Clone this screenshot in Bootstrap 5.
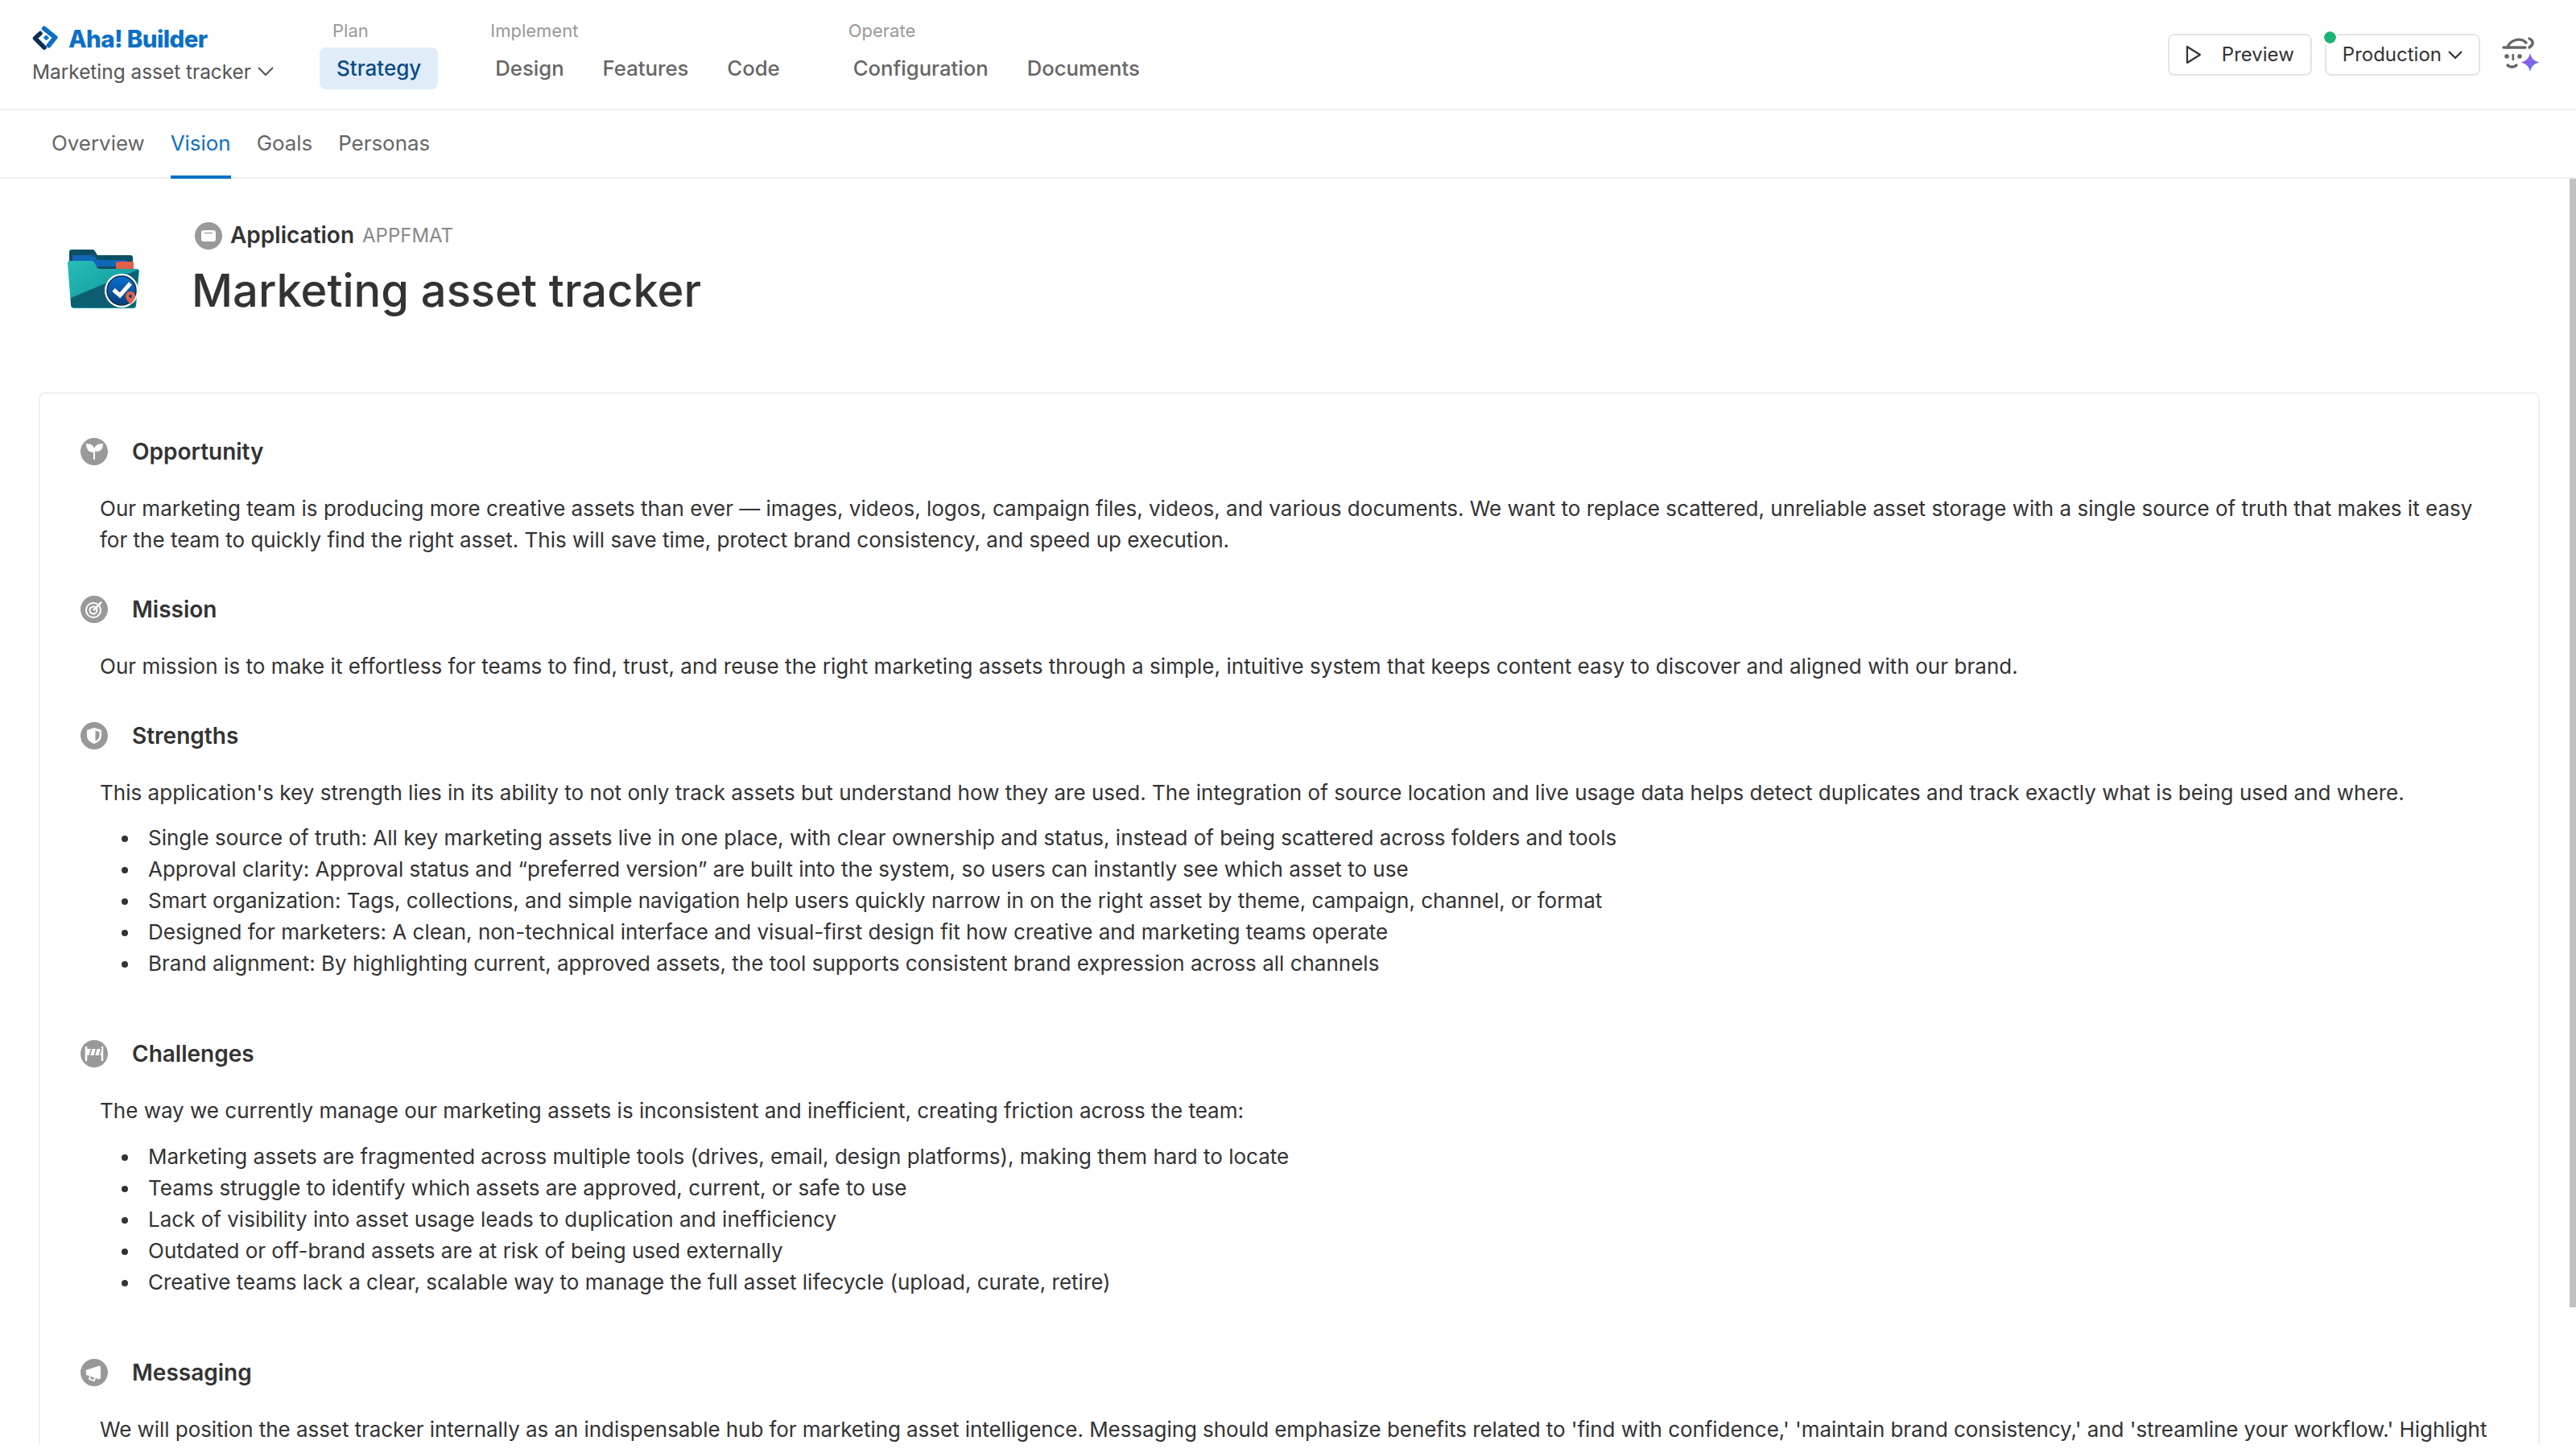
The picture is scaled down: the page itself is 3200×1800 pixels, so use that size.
<!DOCTYPE html>
<html lang="en">
<head>
<meta charset="UTF-8" />
<title>Marketing asset tracker</title>
<link href="https://cdn.jsdelivr.net/npm/bootstrap@5.3.0/dist/css/bootstrap.min.css" rel="stylesheet"/>
<style>
html, body { height: 100%; overflow: hidden; }
body { font-family: Inter, "Liberation Sans", sans-serif; font-size: 26px; line-height: 39px; color: #333; background: #fff; }
.top-bar { height: 137px; border-bottom: 2px solid #f0f0f0; padding: 0 45px 0 40px; }
.brand-box { width: 357px; padding-top: 28px; }
.brand-name { color: #0b6fc6; font-weight: 800; font-size: 29.5px; line-height: 40px; letter-spacing: -.6px; gap: 13px; }
.app-switch { color: #555; font-size: 24.4px; line-height: 36px; margin-top: 3px; gap: 8px; }
.nav-grp { padding-top: 22px; }
.nav-grp-label { color: #999; font-size: 22px; line-height: 32px; padding-left: 16px; }
.nav-grp-items { gap: 6px; margin-top: 5px; }
.top-link { color: #666; font-weight: 500; font-size: 25.7px; line-height: 52px; height: 52px; padding: 0 21px; border-radius: 8px; text-decoration: none; }
.top-link.on { background: #e0edf9; color: #0a4a86; font-size: 26px; }
.grp-impl { margin-left: 50px; }
.grp-impl .nav-grp-label, .grp-oper .nav-grp-label { padding-left: 15px; }
.grp-oper { margin-left: 49px; }
.btn-ghost { height: 52px; border: 2px solid #e4e4e4; border-radius: 8px; background: #fff; color: #333; font-size: 24px; line-height: 48px; padding: 0 20px; }
.dot-live { position: absolute; left: -3px; top: -5px; width: 15px; height: 15px; border-radius: 50%; background: #1eb276; outline: 3px solid #fff; }
.assist-ico { margin: 4px 0 0 12px; overflow: visible; }
.tab-bar { height: 85px; border-bottom: 2px solid #f0f0f0; padding-left: 64px; gap: 32px; }
.tab-link { color: #666; font-size: 25.9px; line-height: 82px; height: 85px; text-decoration: none; }
.tab-link.on { color: #0b6fc6; border-bottom: 4px solid #0b6fc6; }
.page-head { height: 265px; padding: 0 0 0 83px; }
.folder-ico { margin-top: 87px; }
.head-text { margin-left: 65px; padding-top: 51px; }
.kind-row { height: 39px; margin-left: 4px; gap: 10px; font-size: 28px; }
.kind-name { font-weight: 600; }
.kind-ref { color: #888; font-size: 24px; }
.app-title { font-size: 56px; line-height: 72px; font-weight: 500; margin: 13px 0 0; color: #333; letter-spacing: 0; }
.sheet { margin: 0 45px 0 48px; border: 2px solid #f0f0f0; border-bottom: 0; border-radius: 8px 8px 0 0; padding: 54px 48px 0 50px; }
.sec-head { height: 36px; gap: 30px; }
.sec-head h2 { font-size: 28px; line-height: 36px; font-weight: 600; margin: 0; color: #333; }
.sec-body { margin: 0 0 0 24px; padding-top: 33px; }
.sec-body p { margin: 0; }
.sec-body ul { margin: 17px 0 0; padding-left: 50px; }
.sec-body ul.list-low { margin-top: 18px; }
.sec-body li { padding-left: 10px; }
.sec-gap { margin-top: 49px; }
.sec-gap-list { margin-top: 75px; }
.fit-wide { letter-spacing: .05px; }
.fit-mid { letter-spacing: .025px; }
.fit-narrow { letter-spacing: -.06px; }
.scroll-thumb { position: absolute; right: 0; top: 222px; width: 8px; height: 1402px; background: #c1c1c1; }
</style>
</head>
<body class="position-relative">

<header class="top-bar d-flex">
  <div class="brand-box">
    <div class="brand-name d-flex align-items-center">
      <svg width="32" height="32" viewBox="0 0 32 32" fill="none" stroke-linecap="round" stroke-linejoin="round"><path d="M15 3.500 28.500 14.500 20.500 24.500" stroke="#0b6fc6" stroke-width="6"/><path d="M10 9.500 3.500 15.500 15 27" stroke="#0c2f57" stroke-width="5.500"/><path d="M17.500 12 20.500 15 17.500 18 14.500 15Z" fill="#0b6fc6" stroke="#0b6fc6"/></svg>
      <span>Aha! Builder</span>
    </div>
    <div class="app-switch d-flex align-items-center">
      <span>Marketing asset tracker</span>
      <svg width="20" height="12" viewBox="0 0 20 12" fill="none" stroke="#555" stroke-width="2"><path d="M1 1l9 9 9-9"/></svg>
    </div>
  </div>
  <div class="nav-grp">
    <div class="nav-grp-label">Plan</div>
    <div class="nav-grp-items d-flex"><a class="top-link on" href="#">Strategy</a></div>
  </div>
  <div class="nav-grp grp-impl">
    <div class="nav-grp-label">Implement</div>
    <div class="nav-grp-items d-flex"><a class="top-link" href="#">Design</a><a class="top-link" href="#">Features</a><a class="top-link" href="#">Code</a></div>
  </div>
  <div class="nav-grp grp-oper">
    <div class="nav-grp-label">Operate</div>
    <div class="nav-grp-items d-flex"><a class="top-link" href="#">Configuration</a><a class="top-link" href="#">Documents</a></div>
  </div>
  <div class="ms-auto d-flex align-items-start gap-3 pt-5" style="padding-top:42px !important">
    <button class="btn-ghost d-flex align-items-center" type="button">
      <svg width="20" height="24" viewBox="0 0 20 24" fill="none" stroke="#333" stroke-width="2.2" stroke-linejoin="round" style="margin-right:25px"><path d="M2 2v20l16-10Z"/></svg>
      Preview
    </button>
    <button class="btn-ghost d-flex align-items-center gap-2 position-relative" type="button">
      <span class="dot-live"></span>
      Production
      <svg width="18" height="11" viewBox="0 0 18 11" fill="none" stroke="#333" stroke-width="2.2"><path d="M1 1l8 8 8-8"/></svg>
    </button>
    <svg class="assist-ico" width="46" height="46" viewBox="0 0 46 46">
      <defs><linearGradient id="spark" x1="0" y1="0" x2="1" y2="1"><stop offset="0" stop-color="#b04ce8"/><stop offset="1" stop-color="#4d7df0"/></linearGradient></defs>
      <g fill="none" stroke="#666" stroke-width="3.4" stroke-linecap="round">
        <path d="M6 13C8 5 21-1 29 7"/><path d="M1 13h27"/><path d="M33 2c5 2 6 7 0 11"/><path d="M6 35c3 3 8 3 11 0"/>
      </g>
      <circle cx="5" cy="24" r="2.800" fill="#666"/><circle cx="21" cy="24" r="2.800" fill="#666"/><rect x="11.500" y="21" width="2.600" height="8" fill="#666"/>
      <path d="M34 20c2 7 4 9 11 11.500-7 2.500-9 4.500-11 11.500-2-7-4-9-11-11.500 7-2.500 9-4.500 11-11.500Z" fill="url(#spark)"/>
    </svg>
  </div>
</header>

<nav class="tab-bar d-flex">
  <a class="tab-link" href="#">Overview</a>
  <a class="tab-link on" href="#">Vision</a>
  <a class="tab-link" href="#">Goals</a>
  <a class="tab-link" href="#">Personas</a>
</nav>

<section class="page-head d-flex">
  <svg class="folder-ico" width="90" height="76" viewBox="0 0 90 76">
    <defs>
      <linearGradient id="fold" x1="0" y1="0" x2="1" y2="1"><stop offset="0" stop-color="#25bdb8"/><stop offset="1" stop-color="#0f8f98"/></linearGradient>
      <linearGradient id="disc" x1="0" y1="0" x2="0" y2="1"><stop offset="0" stop-color="#0a6fd0"/><stop offset="1" stop-color="#0b3f7a"/></linearGradient>
    </defs>
    <path d="M3 18V4q0-3 3-3h26q2 0 3 2l3 5h41q3 0 3 3v14H3Z" fill="#0c4f63"/>
    <path d="M7 22V10q0-2 2-2h23q2 0 3 2l3 4h36v8Z" fill="#1266b8"/>
    <rect x="61" y="16" width="22" height="10" rx="2" fill="#e2604a"/>
    <path d="M1 18q0-3 3-3h26q3 0 4 2l3 5q1 3 4 3h46q3 0 3 3l-4 43q0 3-4 3H9q-4 0-4-4Z" fill="url(#fold)"/>
    <path d="M89 26 85 70q0 3-4 3H9q-4 0-4-4v-8Z" fill="#0c5f72"/>
    <circle cx="68" cy="52" r="21" fill="#fff"/>
    <circle cx="68" cy="52" r="18" fill="url(#disc)" stroke="#0a2c4c" stroke-width="1.5"/>
    <path d="M58 51l8 7 13-15" fill="none" stroke="#fff" stroke-width="5"/>
    <path d="M79 53c-4 0-6 3-6 6 0 3 3 7 6 10 3-3 6-7 6-10 0-3-2-6-6-6Z" fill="#e2604a"/>
    <circle cx="79" cy="59" r="2" fill="#0b3f7a"/>
  </svg>
  <div class="head-text">
    <div class="kind-row d-flex align-items-center">
      <svg width="34" height="34" viewBox="0 0 34 34"><circle cx="17" cy="17" r="17" fill="#999"/><rect x="8" y="10" width="18" height="14" rx="3" fill="#fff"/><path d="M12 13.500h10" stroke="#999" stroke-width="1.300"/></svg>
      <span class="kind-name">Application</span>
      <span class="kind-ref">APPFMAT</span>
    </div>
    <h1 class="app-title">Marketing asset tracker</h1>
  </div>
</section>

<main class="sheet">
  <div class="sec-head d-flex align-items-center">
    <svg width="34" height="34" viewBox="0 0 34 34"><circle cx="17" cy="17" r="17" fill="#999"/><path d="M17 26V17M17 17C17 11 13 8 8 8c0 6 3 9 9 9ZM18 14c1-4 4-6 9-6 0 5-3 8-8 8" fill="#fff" stroke="#fff" stroke-width="2" stroke-linecap="round" stroke-linejoin="round"/></svg>
    <h2>Opportunity</h2>
  </div>
  <div class="sec-body">
    <p>Our marketing team is producing more creative assets than ever — images, videos, logos, campaign files, videos, and various documents. We want to replace scattered, unreliable asset storage with a single source of truth that makes it easy for the team to quickly find the right asset. This will save time, protect brand consistency, and speed up execution.</p>
  </div>

  <div class="sec-head sec-gap d-flex align-items-center">
    <svg width="34" height="34" viewBox="0 0 34 34"><circle cx="17" cy="17" r="17" fill="#999"/><g fill="none" stroke="#fff" stroke-width="2"><circle cx="16" cy="18" r="9"/><circle cx="16" cy="18" r="4.500"/><path d="M16 18 26 8" stroke-width="2.500"/></g></svg>
    <h2>Mission</h2>
  </div>
  <div class="sec-body">
    <p class="fit-wide">Our mission is to make it effortless for teams to find, trust, and reuse the right marketing assets through a simple, intuitive system that keeps content easy to discover and aligned with our brand.</p>
  </div>

  <div class="sec-head sec-gap d-flex align-items-center">
    <svg width="34" height="34" viewBox="0 0 34 34"><circle cx="17" cy="17" r="17" fill="#999"/><path d="M17 7l9 3v7c0 5-4 8-9 10-5-2-9-5-9-10v-7Z" fill="#fff"/><path d="M18.500 10.500l5 1.700v4.800c0 3-2 5-5 6.500Z" fill="#999"/></svg>
    <h2>Strengths</h2>
  </div>
  <div class="sec-body">
    <p class="fit-mid">This application's key strength lies in its ability to not only track assets but understand how they are used. The integration of source location and live usage data helps detect duplicates and track exactly what is being used and where.</p>
    <ul>
      <li>Single source of truth: All key marketing assets live in one place, with clear ownership and status, instead of being scattered across folders and tools</li>
      <li>Approval clarity: Approval status and “preferred version” are built into the system, so users can instantly see which asset to use</li>
      <li>Smart organization: Tags, collections, and simple navigation help users quickly narrow in on the right asset by theme, campaign, channel, or format</li>
      <li>Designed for marketers: A clean, non-technical interface and visual-first design fit how creative and marketing teams operate</li>
      <li>Brand alignment: By highlighting current, approved assets, the tool supports consistent brand expression across all channels</li>
    </ul>
  </div>

  <div class="sec-head sec-gap-list d-flex align-items-center">
    <svg width="34" height="34" viewBox="0 0 34 34"><circle cx="17" cy="17" r="17" fill="#999"/><path d="M7 9v16M27 9v16" stroke="#fff" stroke-width="2.500" stroke-linecap="round"/><path d="M7 11h20v8H7Z" fill="#fff"/><path d="M11 20l3-10M17 20l3-10M23 20l3-10" stroke="#999" stroke-width="1.800"/></svg>
    <h2>Challenges</h2>
  </div>
  <div class="sec-body">
    <p>The way we currently manage our marketing assets is inconsistent and inefficient, creating friction across the team:</p>
    <ul class="list-low">
      <li>Marketing assets are fragmented across multiple tools (drives, email, design platforms), making them hard to locate</li>
      <li>Teams struggle to identify which assets are approved, current, or safe to use</li>
      <li>Lack of visibility into asset usage leads to duplication and inefficiency</li>
      <li>Outdated or off-brand assets are at risk of being used externally</li>
      <li>Creative teams lack a clear, scalable way to manage the full asset lifecycle (upload, curate, retire)</li>
    </ul>
  </div>

  <div class="sec-head sec-gap-list d-flex align-items-center">
    <svg width="34" height="34" viewBox="0 0 34 34"><circle cx="17" cy="17" r="17" fill="#999"/><path d="M7 14l15-5q3-1 3 2v12q0 3-3 2L7 20Z" fill="#fff"/><path d="M12 21.500l-1 3.500 6 2 1-3.500" fill="none" stroke="#fff" stroke-width="1.800"/></svg>
    <h2>Messaging</h2>
  </div>
  <div class="sec-body">
    <p class="fit-narrow">We will position the asset tracker internally as an indispensable hub for marketing asset intelligence. Messaging should emphasize benefits related to 'find with confidence,' 'maintain brand consistency,' and 'streamline your workflow.' Highlight</p>
  </div>
</main>

<div class="scroll-thumb"></div>
</body>
</html>
